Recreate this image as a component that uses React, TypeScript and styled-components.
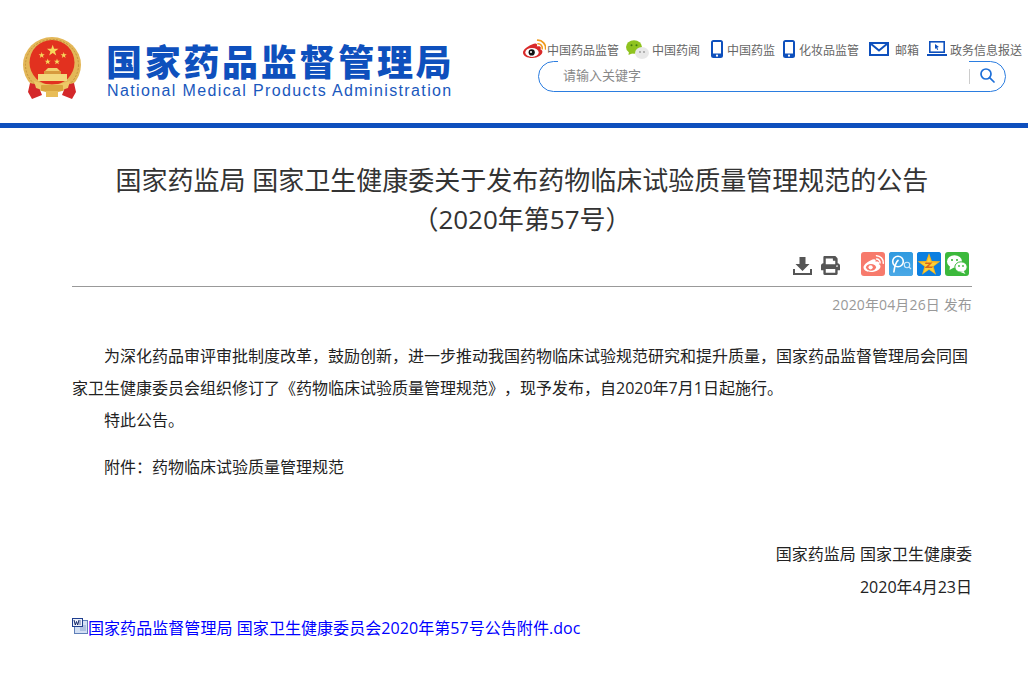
import React from "react";
import styled, { createGlobalStyle } from "styled-components";
import { FaPrint } from "react-icons/fa";

const Global = createGlobalStyle`
  html, body { margin: 0; padding: 0; background: #fff; }
  body {
    font-family: "Open Sans", "Noto Sans CJK SC", sans-serif;
    color: #333;
    text-spacing-trim: space-all;
  }
`;

const Header = styled.header`
  height: 123px;
  display: flex;
  justify-content: space-between;
  border-bottom: 5px solid #0e4fbd;
`;
const Brand = styled.div`
  display: flex;
  align-items: flex-start;
  padding: 36px 0 0 22px;
`;
const BrandText = styled.div`
  margin: 2px 0 0 24px;
  display: flex;
  flex-direction: column;
`;
const BrandCn = styled.div`
  font-family: "Noto Sans CJK SC", sans-serif;
  font-weight: 900;
  font-size: 36px;
  line-height: 44px;
  letter-spacing: 2.7px;
  color: #0e50bd;
  white-space: nowrap;
`;
const BrandEn = styled.div`
  font-family: "Liberation Sans", sans-serif;
  font-size: 16px;
  line-height: 18px;
  letter-spacing: 1.37px;
  margin-left: 1px;
  color: #1a58bd;
  white-space: nowrap;
`;
const HeaderRight = styled.div`
  display: flex;
  flex-direction: column;
  align-items: flex-end;
  padding: 38px 6px 0 0;
`;
const TopNav = styled.nav`
  display: flex;
  align-items: center;
  height: 22px;
  margin-bottom: 1px;
`;
const NavItem = styled.a<{ $gap: number; $ml: number }>`
  display: flex;
  align-items: center;
  gap: ${(p) => p.$gap}px;
  margin-left: ${(p) => p.$ml}px;
  font-family: "Noto Sans CJK SC", sans-serif;
  font-size: 12px;
  color: #666;
  white-space: nowrap;
`;
const SearchBox = styled.div`
  position: relative;
  box-sizing: border-box;
  width: 468px;
  height: 31px;
  margin-right: 16px;
  border: 1px solid #2b7de0;
  border-radius: 16px;
  display: flex;
  align-items: center;
  justify-content: flex-end;
`;
const SearchField = styled.div`
  position: absolute;
  left: 19px;
  top: -2px;
  width: 411px;
  height: 29px;
  background: #fff;
  padding-left: 5px;
  box-sizing: border-box;
  font-family: "Noto Sans CJK SC", sans-serif;
  font-size: 13px;
  line-height: 29px;
  color: #888;
`;
const SearchDivider = styled.span`
  width: 1px;
  height: 15px;
  background: #ccc;
  margin-right: 9px;
`;
const SearchIcon = styled.svg`
  width: 16px;
  height: 16px;
  margin-right: 10px;
  margin-top: -3px;
`;

const Main = styled.main`
  width: 900px;
  margin-left: 72px;
`;
const Title = styled.h1`
  margin: 33px 0 0;
  font-size: 26px;
  font-weight: 400;
  line-height: 39px;
  text-align: center;
  color: #333;
`;
const Tools = styled.div`
  display: flex;
  align-items: center;
  justify-content: flex-end;
  height: 28px;
  margin-top: 11px;
  padding-right: 3px;
  color: #555;
`;
const ToolIcon = styled.span<{ $mr: number }>`
  display: flex;
  width: 19px;
  font-size: 19px;
  margin-right: ${(p) => p.$mr}px;
  margin-top: 3px;
`;
const ShareGroup = styled.div`
  display: flex;
  gap: 4px;
  margin-left: 19px;
`;
const ShareIcon = styled.span<{ $bg: string }>`
  width: 24px;
  height: 24px;
  border-radius: 3px;
  background: ${(p) => p.$bg};
  display: flex;
  overflow: hidden;
`;
const Rule = styled.hr`
  border: 0;
  border-top: 1px solid #999;
  margin: 8px 0 0;
`;
const Published = styled.div`
  text-align: right;
  font-size: 14px;
  line-height: 22px;
  letter-spacing: 0.14px;
  margin-top: 7px;
  color: #999;
`;
const Body = styled.div`
  margin-top: 24px;
  font-size: 16px;
  line-height: 32px;
  color: #222;
`;
const Para = styled.p`
  margin: 0;
  text-indent: 32px;
`;
const Attachment = styled(Para)`
  margin-top: 15px;
`;
const Signature = styled.p`
  margin: 0;
  text-align: right;
  line-height: 33px;
`;
const SignBlock = styled.div`
  margin-top: 55px;
`;
const FileLink = styled.a`
  display: flex;
  align-items: center;
  margin-top: 8px;
  font-size: 16px;
  line-height: 32px;
  letter-spacing: 0.06px;
  color: #0000ff;
  white-space: nowrap;
`;
const DocIcon = styled.svg`
  width: 16px;
  height: 16px;
  margin-top: -5px;
  flex: none;
`;

const starPts = (cx: number, cy: number, r: number) => {
  const p: string[] = [];
  for (let i = 0; i < 10; i++) {
    const a = (Math.PI / 5) * i - Math.PI / 2;
    const rr = i % 2 ? r * 0.4 : r;
    p.push(`${(cx + rr * Math.cos(a)).toFixed(2)},${(cy + rr * Math.sin(a)).toFixed(2)}`);
  }
  return p.join(" ");
};

const Emblem = () => (
  <svg width={60} height={64} viewBox="22 36 60 64">
    <ellipse cx="52" cy="65" rx="29" ry="28" fill="#e3b758" />
    <ellipse cx="52" cy="65" rx="26.500" ry="25.500" fill="none" stroke="#c4933a" strokeWidth="1" strokeDasharray="2 1.500" />
    <circle cx="52" cy="62.500" r="22.500" fill="#e2311f" />
    <polygon points={starPts(52.7, 50.7, 6)} fill="#f6d85c" />
    <polygon points={starPts(41.7, 55.3, 3.2)} fill="#f6d85c" />
    <polygon points={starPts(63.7, 55.3, 3.2)} fill="#f6d85c" />
    <polygon points={starPts(47.7, 61.7, 3.2)} fill="#f6d85c" />
    <polygon points={starPts(57, 61.7, 3.2)} fill="#f6d85c" />
    <path d="M45 71 L48 68 L57 68 L60 71 Z" fill="#f2d070" />
    <rect x="44" y="71" width="17" height="3" fill="#d79b3e" />
    <rect x="38" y="74" width="29" height="7" fill="#f3d97e" />
    <path d="M30 83 L38 85 L42 95 L32 99 L28 92 Z M74 83 L66 85 L62 95 L72 99 L76 92 Z" fill="#d4282a" />
    <path d="M34 81 Q52 88 70 81 L68 88 Q52 95 36 88 Z" fill="#eec867" />
    <rect x="41" y="85" width="22" height="6" rx="1" fill="#d9a53e" />
    <rect x="46" y="91" width="12" height="6" fill="#e8bd58" />
  </svg>
);

const WeiboColor = () => (
  <svg width={24} height={20} viewBox="0 0 24 20">
    <path d="M10 5.400c2.400-1 4.300-1.200 4.900-.2.400.7.200 1.500-.1 2.300 1.800-.6 3.400-.4 3.900.7.300.7.100 1.400-.3 2 1.100.4 2 1.200 2 2.500 0 3-4.500 6.200-10.200 6.200C5 18.900 1 16.800 1 13.400 1 10.900 5 7.300 10 5.400z" fill="#d92a2a" />
    <ellipse cx="10" cy="13.400" rx="6.700" ry="4.500" fill="#fff" />
    <circle cx="9.700" cy="13.400" r="3.100" fill="#111" />
    <circle cx="9" cy="13" r="1" fill="#fff" />
    <path d="M16 4.800a4.200 4.200 0 0 1 4.200 5" fill="none" stroke="#f09a1a" strokeWidth="1.600" strokeLinecap="round" />
    <path d="M15.700 1.200a8 8 0 0 1 7.900 8.800" fill="none" stroke="#f09a1a" strokeWidth="1.700" strokeLinecap="round" />
  </svg>
);
const WechatColor = () => (
  <svg width={23} height={20} viewBox="0 0 23 20">
    <ellipse cx="8" cy="8" rx="8" ry="6.700" fill="#8fc31f" />
    <path d="M3 12 L2.500 16 L7 14 Z" fill="#8fc31f" />
    <circle cx="5.500" cy="6.200" r="1" fill="#3f7a10" />
    <circle cx="10.500" cy="6.200" r="1" fill="#3f7a10" />
    <ellipse cx="16" cy="14" rx="7" ry="6" fill="#e8e8e8" />
    <circle cx="14" cy="13" r=".9" fill="#999" />
    <circle cx="18" cy="13" r=".9" fill="#999" />
  </svg>
);
const Phone = () => (
  <svg width={12} height={18} viewBox="0 0 12 18">
    <rect x="0" y="0" width="12" height="18" rx="2.500" fill="#0e50bd" />
    <rect x="2" y="2" width="8" height="11.500" fill="#fff" />
    <circle cx="6" cy="15.700" r="1.100" fill="#fff" />
  </svg>
);
const Mail = () => (
  <svg width={20} height={14} viewBox="0 0 20 14">
    <rect x="1" y="1" width="18" height="12" fill="#fff" stroke="#0e50bd" strokeWidth="2" />
    <path d="M1.500 1.500 L10 8.500 L18.500 1.500" fill="none" stroke="#0e50bd" strokeWidth="2" />
  </svg>
);
const Laptop = () => (
  <svg width={20} height={16} viewBox="0 0 20 16">
    <rect x="2.800" y=".8" width="14.400" height="10.400" fill="#fff" stroke="#0e50bd" strokeWidth="1.600" />
    <path d="M0 13h20v2H0z" fill="#0e50bd" />
    <path d="M8 3l4 3-1.800.4 1 2-1 .5-1-2L8 8z" fill="#0e50bd" />
  </svg>
);
const DownloadGlyph = () => (
  <svg width={19} height={19} viewBox="0 0 19 19">
    <path d="M6.500 1h6v7h4l-7 7-7-7h4z" fill="#555" />
    <path d="M1 13v5h17v-5" fill="none" stroke="#555" strokeWidth="2" />
  </svg>
);

const ShareWeibo = () => (
  <svg width={24} height={24} viewBox="0 0 24 24">
    <path d="M9.500 8.500c2.400-1.300 4.400-1.500 5-.5.300.6.200 1.200-.100 1.800 1.700-.5 3.200-.2 3.600.8.200.6.100 1.100-.2 1.600 1 .4 1.700 1.100 1.700 2.200 0 2.800-4.300 5.600-9.400 5.600C5.500 20 2.500 18.300 2.500 15.300c0-2 3-5 7-6.800z" fill="#fff" />
    <ellipse cx="10" cy="15.300" rx="5" ry="3.400" fill="#f77a6c" />
    <circle cx="9.600" cy="15.300" r="2.100" fill="#fff" />
    <path d="M15.500 7a3.500 3.500 0 0 1 3.500 4" fill="none" stroke="#fff" strokeWidth="1.500" strokeLinecap="round" />
    <path d="M15.500 3.800a7 7 0 0 1 6.800 7.500" fill="none" stroke="#fff" strokeWidth="1.500" strokeLinecap="round" />
  </svg>
);
const ShareTencent = () => (
  <svg width={24} height={24} viewBox="0 0 24 24">
    <defs>
      <linearGradient id="tw" x1="0" y1="0" x2="0" y2="1">
        <stop offset="0" stopColor="#2f9ae0" />
        <stop offset="1" stopColor="#4aa8e6" />
      </linearGradient>
    </defs>
    <rect width="24" height="24" fill="url(#tw)" />
    <circle cx="9" cy="9.500" r="5.300" fill="none" stroke="#fff" strokeWidth="1.600" />
    <path d="M4.800 20.500 C5.500 15 6.500 10 9.500 8" fill="none" stroke="#fff" strokeWidth="1.600" />
    <circle cx="18" cy="13" r="2.700" fill="none" stroke="#cfe8fa" strokeWidth="1.100" />
    <path d="M20 15l2 2" stroke="#cfe8fa" strokeWidth="1.100" />
  </svg>
);
const ShareQzone = () => (
  <svg width={24} height={24} viewBox="0 0 24 24">
    <rect width="24" height="24" fill="#0c7fe0" />
    <polygon points={starPts(12, 13, 12)} fill="#f7b51e" />
    <polygon points={starPts(12, 13.5, 9)} fill="#fcd03a" />
    <path d="M8.500 10.500h7l-4 4h4.500l-1 1.500H7.500l4.500-4H8z" fill="#d8661a" />
  </svg>
);
const ShareWechat = () => (
  <svg width={24} height={24} viewBox="0 0 24 24">
    <ellipse cx="9.500" cy="9.500" rx="7.500" ry="6.300" fill="#fff" />
    <path d="M5 14 L4.500 18 L9 15.500 Z" fill="#fff" />
    <circle cx="7" cy="8" r="1.100" fill="#3cb93c" />
    <circle cx="12" cy="8" r="1.100" fill="#3cb93c" />
    <ellipse cx="16" cy="15" rx="6.200" ry="5.200" fill="#fff" stroke="#3cb93c" strokeWidth="1" />
    <path d="M18.500 19 L20.500 22 L15.500 20 Z" fill="#fff" />
    <circle cx="14" cy="14" r=".9" fill="#3cb93c" />
    <circle cx="18" cy="14" r=".9" fill="#3cb93c" />
  </svg>
);

const WordIcon = () => (
  <DocIcon viewBox="0 0 16 16">
    <rect x="2.500" y="2.500" width="13" height="13" fill="#d3e0f4" stroke="#5f7fb8" />
    <path d="M8 8h6M8 10h6M8 12h6" stroke="#8ba4cf" />
    <rect x="0" y="0" width="11" height="9" fill="#1f3f8f" />
    <rect x="1" y="1" width="9" height="7" fill="#eef2fa" />
    <path d="M2 2l1.300 5L4.500 3.500 5.700 7 7 2" fill="none" stroke="#14286a" strokeWidth="1" />
    <path d="M8 2v5" stroke="#5a70aa" />
  </DocIcon>
);

export default function App() {
  return (
    <>
      <Global />
      <Header>
        <Brand>
          <Emblem />
          <BrandText>
            <BrandCn>国家药品监督管理局</BrandCn>
            <BrandEn>National Medical Products Administration</BrandEn>
          </BrandText>
        </Brand>
        <HeaderRight>
          <TopNav>
            <NavItem $gap={1} $ml={0}><WeiboColor />中国药品监管</NavItem>
            <NavItem $gap={3} $ml={7}><WechatColor />中国药闻</NavItem>
            <NavItem $gap={4} $ml={11}><Phone />中国药监</NavItem>
            <NavItem $gap={4} $ml={8}><Phone />化妆品监管</NavItem>
            <NavItem $gap={6} $ml={10}><Mail />邮箱</NavItem>
            <NavItem $gap={3} $ml={8}><Laptop />政务信息报送</NavItem>
          </TopNav>
          <SearchBox>
            <SearchField>请输入关键字</SearchField>
            <SearchDivider />
            <SearchIcon viewBox="0 0 16 16">
              <circle cx="7" cy="7" r="5" fill="none" stroke="#1d6fd8" strokeWidth="1.700" />
              <path d="M10.600 10.600L15 15" stroke="#1d6fd8" strokeWidth="1.700" strokeLinecap="round" />
            </SearchIcon>
          </SearchBox>
        </HeaderRight>
      </Header>
      <Main>
        <Title>
          国家药监局 国家卫生健康委关于发布药物临床试验质量管理规范的公告
          <br />
          （2020年第57号）
        </Title>
        <Tools>
          <ToolIcon $mr={9}><DownloadGlyph /></ToolIcon>
          <ToolIcon $mr={2}><FaPrint /></ToolIcon>
          <ShareGroup>
            <ShareIcon $bg="#f77a6c"><ShareWeibo /></ShareIcon>
            <ShareIcon $bg="#2f9ae0"><ShareTencent /></ShareIcon>
            <ShareIcon $bg="#0c7fe0"><ShareQzone /></ShareIcon>
            <ShareIcon $bg="#3cb93c"><ShareWechat /></ShareIcon>
          </ShareGroup>
        </Tools>
        <Rule />
        <Published>2020年04月26日 发布</Published>
        <Body>
          <Para>为深化药品审评审批制度改革，鼓励创新，进一步推动我国药物临床试验规范研究和提升质量，国家药品监督管理局会同国家卫生健康委员会组织修订了《药物临床试验质量管理规范》，现予发布，自2020年7月1日起施行。</Para>
          <Para>特此公告。</Para>
          <Attachment>附件：药物临床试验质量管理规范</Attachment>
          <SignBlock>
            <Signature>国家药监局 国家卫生健康委</Signature>
            <Signature>2020年4月23日</Signature>
          </SignBlock>
          <FileLink><WordIcon />国家药品监督管理局 国家卫生健康委员会2020年第57号公告附件.doc</FileLink>
        </Body>
      </Main>
    </>
  );
}
